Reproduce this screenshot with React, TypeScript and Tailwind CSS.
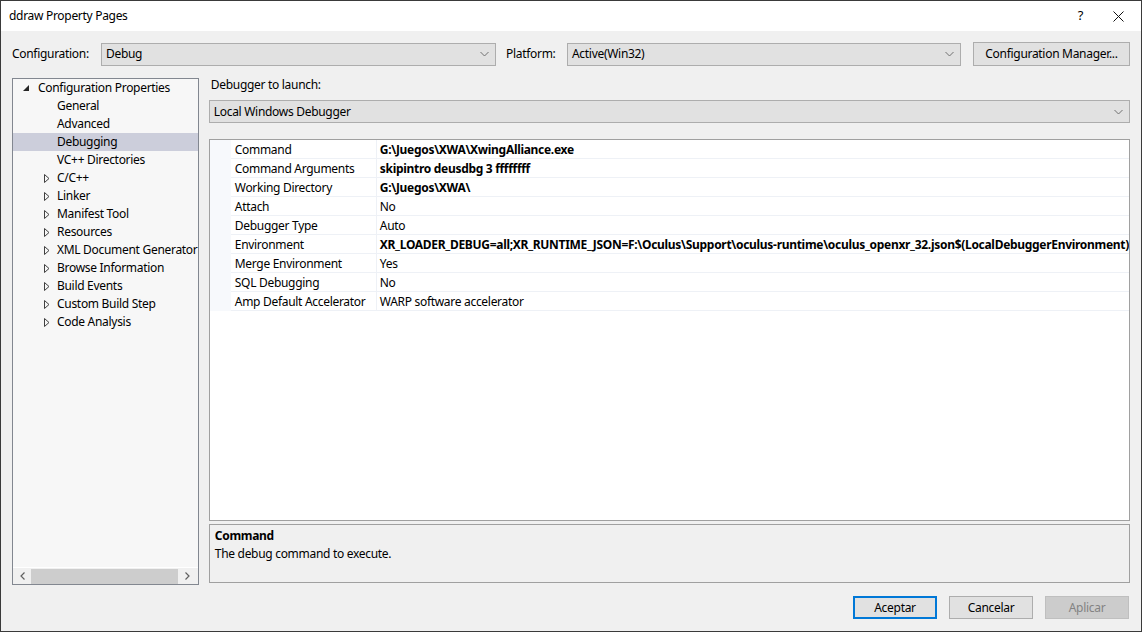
import React from "react";

const font = { fontFamily: '"Noto Sans", "Segoe UI", sans-serif' };

function Chevron() {
  return (
    <svg width="9" height="6" viewBox="0 0 9 6" className="shrink-0">
      <polyline points="0.5,1 4.5,5 8.5,1" fill="none" stroke="#707070" strokeWidth="1" />
    </svg>
  );
}

function Dropdown({ value, className }: { value: string; className: string }) {
  return (
    <div className={`flex h-[23px] items-center justify-between border border-[#adadad] bg-[#e1e1e1] pl-[4px] pr-[6px] ${className}`}>
      <span>{value}</span>
      <Chevron />
    </div>
  );
}

const tree: { label: string; level: number; icon?: "open" | "closed"; selected?: boolean }[] = [
  { label: "Configuration Properties", level: 0, icon: "open" },
  { label: "General", level: 1 },
  { label: "Advanced", level: 1 },
  { label: "Debugging", level: 1, selected: true },
  { label: "VC++ Directories", level: 1 },
  { label: "C/C++", level: 1, icon: "closed" },
  { label: "Linker", level: 1, icon: "closed" },
  { label: "Manifest Tool", level: 1, icon: "closed" },
  { label: "Resources", level: 1, icon: "closed" },
  { label: "XML Document Generator", level: 1, icon: "closed" },
  { label: "Browse Information", level: 1, icon: "closed" },
  { label: "Build Events", level: 1, icon: "closed" },
  { label: "Custom Build Step", level: 1, icon: "closed" },
  { label: "Code Analysis", level: 1, icon: "closed" },
];

const props: { name: string; value: string; bold?: boolean }[] = [
  { name: "Command", value: "G:\\Juegos\\XWA\\XwingAlliance.exe", bold: true },
  { name: "Command Arguments", value: "skipintro deusdbg 3 ffffffff", bold: true },
  { name: "Working Directory", value: "G:\\Juegos\\XWA\\", bold: true },
  { name: "Attach", value: "No" },
  { name: "Debugger Type", value: "Auto" },
  {
    name: "Environment",
    value:
      "XR_LOADER_DEBUG=all;XR_RUNTIME_JSON=F:\\Oculus\\Support\\oculus-runtime\\oculus_openxr_32.json$(LocalDebuggerEnvironment)",
    bold: true,
  },
  { name: "Merge Environment", value: "Yes" },
  { name: "SQL Debugging", value: "No" },
  { name: "Amp Default Accelerator", value: "WARP software accelerator" },
];

function TreeIcon({ kind }: { kind?: "open" | "closed" }) {
  if (kind === "open")
    return (
      <svg width="8" height="8" viewBox="0 0 8 8">
        <polygon points="7,1 7,7 1,7" fill="#262626" />
      </svg>
    );
  if (kind === "closed")
    return (
      <svg width="6" height="9" viewBox="0 0 6 9">
        <polygon points="0.5,0.5 5,4.5 0.5,8.5" fill="none" stroke="#404040" strokeWidth="1" />
      </svg>
    );
  return null;
}

export default function App() {
  return (
    <div style={font} className="flex h-[632px] w-[1142px] flex-col overflow-hidden border border-[#3a3a3a] bg-[#f0f0f0] text-[12px] tracking-[-0.3px] text-black">
      {/* title bar */}
      <div className="flex h-[30px] shrink-0 items-center justify-between bg-white pl-[8px]">
        <span>ddraw Property Pages</span>
        <div className="flex items-center gap-[30px] pr-[17px]">
          <span className="text-[13px]">?</span>
          <svg width="11" height="11" viewBox="0 0 11 11">
            <path d="M0.5 0.5 L10.5 10.5 M10.5 0.5 L0.5 10.5" stroke="#111" strokeWidth="1" />
          </svg>
        </div>
      </div>

      {/* configuration row */}
      <div className="mt-[11px] flex items-center pl-[11px] pr-[11px]">
        <span className="w-[89px]">Configuration:</span>
        <Dropdown value="Debug" className="w-[395px]" />
        <span className="ml-[10px] w-[61px]">Platform:</span>
        <Dropdown value="Active(Win32)" className="w-[394px]" />
        <button className="ml-[12px] h-[24px] w-[157px] border border-[#adadad] bg-[#e1e1e1]">Configuration Manager...</button>
      </div>

      {/* main */}
      <div className="mt-[12px] flex h-[507px] gap-[10px] pl-[11px] pr-[11px]">
        {/* tree */}
        <div className="flex w-[187px] flex-col border border-[#828790] bg-[#f7f7f7]">
          <div className="flex-1">
            {tree.map((t) => (
              <div
                key={t.label}
                className={`flex h-[18px] items-center whitespace-nowrap ${t.selected ? "bg-[#cccedb]" : ""} ${t.level === 0 ? "pl-[9px]" : "pl-[31px]"}`}
              >
                <span className={`flex shrink-0 items-center ${t.level === 0 ? "w-[14px]" : "w-[11px]"}`}>
                  <TreeIcon kind={t.icon} />
                </span>
                <span className="ml-[2px]">{t.label}</span>
              </div>
            ))}
          </div>
          <div className="flex h-[17px] items-center border-t border-[#ffffff] bg-[#f0f0f0]">
            <span className="flex w-[18px] justify-center">
              <svg width="5" height="8" viewBox="0 0 5 8">
                <polyline points="4.5,0.5 1,4 4.5,7.5" fill="none" stroke="#606060" strokeWidth="1.2" />
              </svg>
            </span>
            <div className="h-[15px] w-[147px] bg-[#cdcdcd]" />
            <span className="flex flex-1 justify-center">
              <svg width="5" height="8" viewBox="0 0 5 8">
                <polyline points="0.5,0.5 4,4 0.5,7.5" fill="none" stroke="#606060" strokeWidth="1.2" />
              </svg>
            </span>
          </div>
        </div>

        {/* right side */}
        <div className="flex w-[922px] flex-col">
          <div className="h-[22px] pl-[2px] leading-[14px]">Debugger to launch:</div>
          <Dropdown value="Local Windows Debugger" className="w-full" />
          <div className="mt-[16px] h-[382px] overflow-hidden border border-[#a0a0a0] bg-white">
            {props.map((p) => (
              <div key={p.name} className="flex h-[19px] items-stretch">
                <div className="w-[21px] shrink-0 bg-[#f7f9fc]" />
                <div className="flex w-[146px] shrink-0 items-center border-b border-r border-[#eef1f6] pl-[4px] pt-[1px] whitespace-nowrap">
                  {p.name}
                </div>
                <div className={`flex min-w-0 flex-1 items-center overflow-hidden border-b border-[#eef1f6] pl-[3px] pt-[1px] whitespace-nowrap ${p.bold ? "font-bold" : ""}`}>
                  {p.value}
                </div>
              </div>
            ))}
          </div>
          <div className="mt-[3px] h-[59px] border border-[#a0a0a0] bg-[#f0f0f0] px-[5px] pt-[2px]">
            <div className="font-bold leading-[18px]">Command</div>
            <div className="leading-[18px]">The debug command to execute.</div>
          </div>
        </div>
      </div>

      {/* footer buttons */}
      <div className="mt-[11px] flex justify-end gap-[12px] pr-[12px]">
        <button className="h-[23px] w-[84px] border-2 border-[#0078d7] bg-[#e1e1e1]">Aceptar</button>
        <button className="h-[23px] w-[84px] border border-[#adadad] bg-[#e1e1e1]">Cancelar</button>
        <button className="h-[23px] w-[84px] border border-[#bfbfbf] bg-[#cccccc] text-[#838383]">Aplicar</button>
      </div>
    </div>
  );
}
